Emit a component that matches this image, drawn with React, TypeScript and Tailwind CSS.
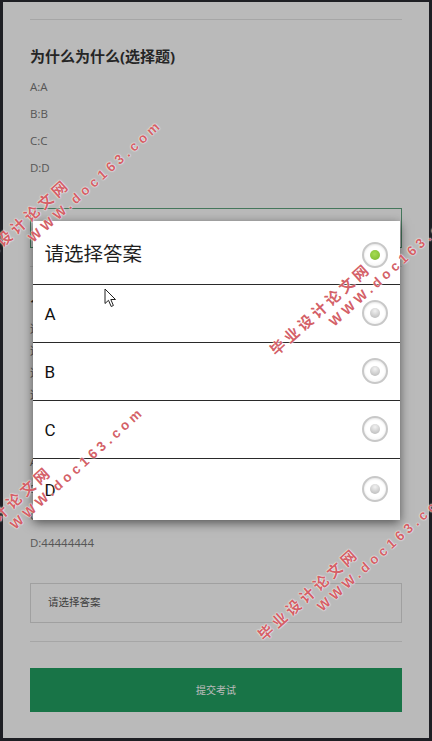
import React from "react";

type Question = {
  title: string;
  desc?: string;
  options: string[];
  focused?: boolean;
};

const questions: Question[] = [
  { title: "为什么为什么(选择题)", options: ["A:A", "B:B", "C:C", "D:D"], focused: true },
  {
    title: "1111111111(选择题)",
    desc: "这是一道测试题目的题干描述内容，这是一道测试题目的题干描述内容，这是一道测试题目的题干描述内容，这是一道测试题目的题干描述内容，这是一道测试题目的题干描述内容，这是一道测试题目的题干描述内容，这是一道测试题目的题干描述内容",
    options: ["A:11111111", "B:22222222", "C:33333333", "D:44444444"],
  },
];

const choices = ["A", "B", "C", "D"];

function QuestionBlock({ q }: { q: Question }) {
  return (
    <div className="border-t border-[#e4e4e4] pt-[26px] pb-[18px]">
      <h2 className="text-[15px] leading-[20px] font-bold text-[#333]">{q.title}</h2>
      {q.desc ? (
        <p className="mt-[5px] text-[11.5px] leading-[22px] text-[#777]">{q.desc}</p>
      ) : null}
      <div className={`flex flex-col gap-[11px] ${q.desc ? "mt-[48px]" : "mt-[13px]"}`}>
        {q.options.map((o) => (
          <div key={o} className="text-[11.5px] leading-[16px] text-[#777]">
            {o}
          </div>
        ))}
      </div>
      <div
        className={`mt-[32px] flex h-[40px] items-center border px-[17px] text-[10.5px] text-[#555] ${
          q.focused ? "border-[#5fa37e]" : "border-[#dcdcdc]"
        }`}
      >
        请选择答案
      </div>
    </div>
  );
}

function Radio({ checked }: { checked?: boolean }) {
  return (
    <div className="flex h-[26px] w-[26px] items-center justify-center rounded-full border-2 border-[#c8c8c8] bg-[radial-gradient(circle_at_50%_40%,#ffffff_55%,#ececec)] shadow-[inset_0_1px_2px_rgba(0,0,0,0.1)]">
      {checked ? (
        <div className="h-[10px] w-[10px] rounded-full bg-[radial-gradient(circle_at_45%_40%,#a6dc52,#79b52c)]" />
      ) : (
        <div className="h-[10px] w-[10px] rounded-full bg-[radial-gradient(circle_at_50%_30%,#f2f2f2,#b4b4b4)]" />
      )}
    </div>
  );
}

function Watermark({ className }: { className: string }) {
  return (
    <div
      className={`pointer-events-none absolute origin-[0_8px] -rotate-[42deg] whitespace-nowrap font-bold text-[#c9353e]/80 [text-shadow:0_0_2px_#fff,0_0_1px_#fff] ${className}`}
    >
      <div className="h-[16px] font-['Noto_Sans_CJK_SC',sans-serif] text-[15px] leading-[16px] tracking-[3.5px]">
        毕业设计论文网
      </div>
      <div className="mt-[3px] ml-[63px] h-[16px] font-['Liberation_Sans',sans-serif] text-[13.5px] leading-[16px] tracking-[4px]">
        WWW.doc163.com
      </div>
    </div>
  );
}

export default function App() {
  return (
    <div className="relative h-[741px] w-[432px] overflow-hidden bg-[#1e1f24] pt-[2px] pr-[3px] pb-[3px] pl-[3px]">
      <div className="relative h-full overflow-hidden bg-white font-['Open_Sans','Noto_Sans_CJK_SC',sans-serif]">
        {/* page, scrolled */}
        <div className="px-[27px] pt-[17px]">
          {questions.map((q) => (
            <QuestionBlock key={q.title} q={q} />
          ))}
          <div className="border-t border-[#e4e4e4] pt-[26px]">
            <button className="flex h-[44px] w-full items-center justify-center bg-[#21a062] text-[10px] text-white">
              提交考试
            </button>
          </div>
        </div>

        {/* backdrop */}
        <div className="absolute inset-0 bg-black/[0.27]" />

        {/* dialog */}
        <div className="absolute inset-0 flex items-center justify-center">
          <div className="w-[367px] bg-white font-['Roboto','Noto_Sans_CJK_SC',sans-serif] shadow-[0_3px_10px_rgba(0,0,0,0.55)]">
            <div className="flex h-[63px] items-center justify-between pt-[5px] pr-[12px] pl-[12px]">
              <span className="text-[19.5px] text-[#1e1e1e]">请选择答案</span>
              <Radio checked />
            </div>
            {choices.map((c, i) => (
              <div
                key={c}
                className={`flex items-center justify-between border-t-[1.5px] border-[#2a2a2a] pr-[12px] pl-[12px] ${
                  i === 3 ? "h-[62px]" : "h-[58px]"
                }`}
              >
                <span className="pt-[3px] text-[17px] text-[#111]">{c}</span>
                <Radio />
              </div>
            ))}
          </div>
        </div>
      </div>

      {/* mouse pointer */}
      <svg className="absolute top-[288px] left-[104px]" width="13" height="20" viewBox="0 0 13 20">
        <path d="M1 1 L1 15.5 L4.5 12.3 L7.2 18.5 L9.4 17.5 L6.8 11.5 L11.5 11.5 Z" fill="#fff" stroke="#222" strokeWidth="1" strokeLinejoin="round" />
      </svg>

      <Watermark className="top-[260px] left-[-29px]" />
      <Watermark className="top-[344px] left-[272px]" />
      <Watermark className="top-[547px] left-[-47px]" />
      <Watermark className="top-[629px] left-[260px]" />
    </div>
  );
}
